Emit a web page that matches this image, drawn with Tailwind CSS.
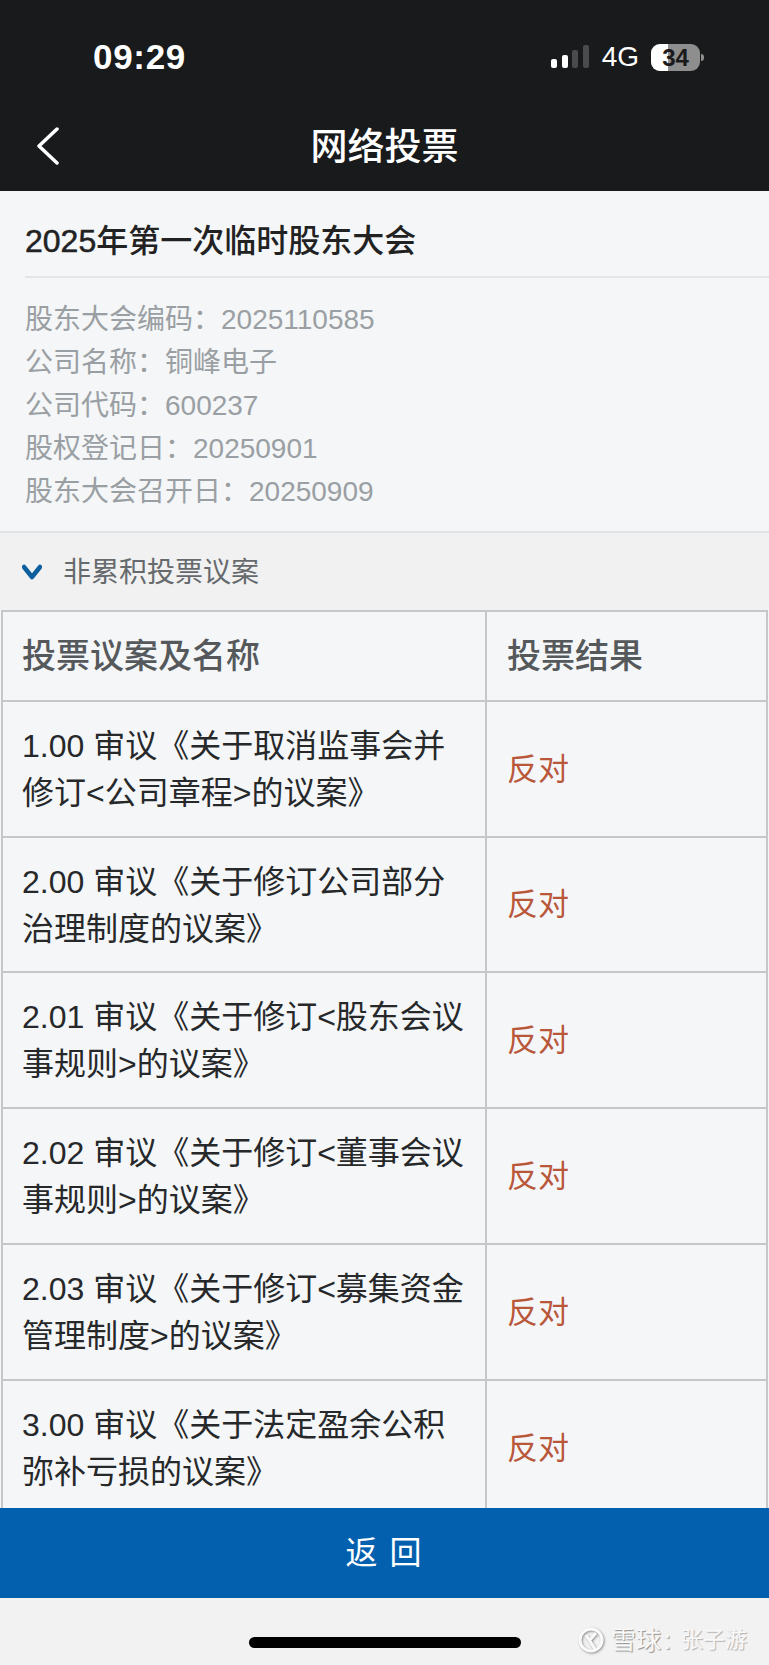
<!DOCTYPE html>
<html lang="zh">
<head>
  <meta charset="UTF-8">
  <meta name="viewport" content="width=device-width, initial-scale=1.0">
  <title>网络投票</title>
  <script src="https://cdn.jsdelivr.net/npm/@tailwindcss/browser@4"></script>
</head>
<body class="bg-[#f2f2f2] font-['Liberation_Sans','Noto_Sans_CJK_SC',sans-serif]">
  <div class="relative flex flex-col w-[769px] h-[1665px] overflow-hidden">
    <!-- status bar + title -->
    <header class="bg-[#181a1c] text-white h-[191px] shrink-0">
      <div class="flex items-center justify-between h-[114px] pl-[93px] pr-[65px]">
        <span class="text-[35px] font-bold tracking-[0.7px]">09:29</span>
        <div class="flex items-center">
          <svg width="38" height="24" viewBox="0 0 38 24">
            <rect x="0" y="14" width="6" height="9" rx="2" fill="#fff"/>
            <rect x="11" y="10" width="6" height="13" rx="2" fill="#fff"/>
            <rect x="21" y="5" width="6" height="18" rx="2" fill="#4a4b4d"/>
            <rect x="32" y="0" width="6" height="23" rx="2" fill="#4a4b4d"/>
          </svg>
          <span class="ml-[13px] text-[28px]">4G</span>
          <div class="relative ml-[12px] w-[49px] h-[27px] rounded-[9px] overflow-hidden flex bg-[#8e8e8e]">
            <div class="w-[17px] bg-white"></div>
            <span class="absolute inset-0 text-center text-[24px] leading-[27px] font-bold text-[#1a1a1a]">34</span>
          </div>
          <div class="ml-[1px] w-[3px] h-[7px] rounded-r-sm bg-[#8e8e8e]"></div>
        </div>
      </div>
      <div class="relative flex items-center justify-center h-[66px]">
        <svg class="absolute left-[36px] top-[13px]" width="24" height="38" viewBox="0 0 24 38" fill="none" stroke="#fff" stroke-width="3.5" stroke-linecap="round" stroke-linejoin="round">
          <path d="M21 2 L3 19 L21 36"/>
        </svg>
        <h1 class="text-[37px] font-medium pt-[2px]">网络投票</h1>
      </div>
    </header>

    <main class="flex-1 min-h-0 overflow-hidden bg-[#f4f6f8]">
      <div class="pl-[25px]">
        <h2 class="h-[87px] pt-[28px] leading-[44px] text-[32px] font-medium text-[#222] border-b-2 border-[#e3e5e7]"><span class="[-webkit-text-stroke:0.5px_#222]">2025</span>年第一次临时股东大会</h2>
      </div>
      <div class="pl-[25px] pt-[20px] pb-[18px] text-[28px] leading-[43px] text-[#9a9fa3] border-b-2 border-[#e2e3e4]">
        <p>股东大会编码：2025110585</p>
        <p>公司名称：铜峰电子</p>
        <p>公司代码：600237</p>
        <p>股权登记日：20250901</p>
        <p>股东大会召开日：20250909</p>
      </div>
      <div class="flex items-center h-[77px] bg-[#f1f1f1] pl-[22px] text-[28px] text-[#666a6d]">
        <svg width="20" height="16" viewBox="0 0 20 16" fill="none" stroke="#0e5f9e" stroke-width="4.5" stroke-linecap="round" stroke-linejoin="round">
          <path d="M2 3 L10 13 L18 3"/>
        </svg>
        <span class="ml-[21px] mt-[3px]">非累积投票议案</span>
      </div>
      <table class="w-[767px] ml-px table-fixed border-collapse text-left">
        <colgroup><col class="w-[484px]"><col></colgroup>
        <thead>
          <tr class="h-[90px] text-[34px] font-medium text-[#55595c]">
            <th class="border-2 border-[#c6c7c8] pl-[19px] font-medium">投票议案及名称</th>
            <th class="border-2 border-[#c6c7c8] pl-[20px] font-medium">投票结果</th>
          </tr>
        </thead>
        <tbody class="text-[32px] leading-[47px] text-[#26282a]">
          <tr class="h-[136px]">
            <td class="border-2 border-[#c6c7c8] pl-[19px] pr-[14px] pt-[2px]">1.00 审议《关于取消监事会并修订&lt;公司章程&gt;的议案》</td>
            <td class="border-2 border-[#c6c7c8] pl-[20px] text-[31px] text-[#b9573a]">反对</td>
          </tr>
          <tr class="h-[135px]">
            <td class="border-2 border-[#c6c7c8] pl-[19px] pr-[14px] pt-[2px]">2.00 审议《关于修订公司部分治理制度的议案》</td>
            <td class="border-2 border-[#c6c7c8] pl-[20px] text-[31px] text-[#b9573a]">反对</td>
          </tr>
          <tr class="h-[136px]">
            <td class="border-2 border-[#c6c7c8] pl-[19px] pr-[14px] pt-[2px]">2.01 审议《关于修订&lt;股东会议事规则&gt;的议案》</td>
            <td class="border-2 border-[#c6c7c8] pl-[20px] text-[31px] text-[#b9573a]">反对</td>
          </tr>
          <tr class="h-[136px]">
            <td class="border-2 border-[#c6c7c8] pl-[19px] pr-[14px] pt-[2px]">2.02 审议《关于修订&lt;董事会议事规则&gt;的议案》</td>
            <td class="border-2 border-[#c6c7c8] pl-[20px] text-[31px] text-[#b9573a]">反对</td>
          </tr>
          <tr class="h-[136px]">
            <td class="border-2 border-[#c6c7c8] pl-[19px] pr-[14px] pt-[2px]">2.03 审议《关于修订&lt;募集资金管理制度&gt;的议案》</td>
            <td class="border-2 border-[#c6c7c8] pl-[20px] text-[31px] text-[#b9573a]">反对</td>
          </tr>
          <tr class="h-[136px]">
            <td class="border-2 border-[#c6c7c8] pl-[19px] pr-[14px] pt-[2px]">3.00 审议《关于法定盈余公积弥补亏损的议案》</td>
            <td class="border-2 border-[#c6c7c8] pl-[20px] text-[31px] text-[#b9573a]">反对</td>
          </tr>
        </tbody>
      </table>
    </main>

    <button class="shrink-0 h-[90px] pl-[10px] bg-[#0260ae] text-white text-[32px] tracking-[12px]">返回</button>
    <footer class="shrink-0 h-[67px] bg-[#f2f2f2] flex justify-center pt-[39px]">
      <div class="w-[272px] h-[11px] rounded-full bg-black"></div>
    </footer>

    <!-- watermark -->
    <div class="absolute right-[22px] bottom-[12px] flex items-center leading-[26px] text-[#f9f9f9] [text-shadow:1px_1px_1px_#8f8f8f]">
      <svg width="28" height="26" viewBox="0 0 28 26" fill="none" stroke="#fafafa" stroke-width="3" class="mr-[6px] drop-shadow-[1px_1px_1px_#8f8f8f]">
        <circle cx="14" cy="13" r="11"/>
        <path d="M9 8 L18 22 M19 6 L12 14"/>
      </svg>
      <span class="text-[25px]">雪球</span>
      <span class="text-[25px] ml-[3px] mr-[10px]">:</span>
      <span class="text-[22px] [text-shadow:1px_1px_1px_#b0b0b0]">张子游</span>
    </div>
  </div>
</body>
</html>
